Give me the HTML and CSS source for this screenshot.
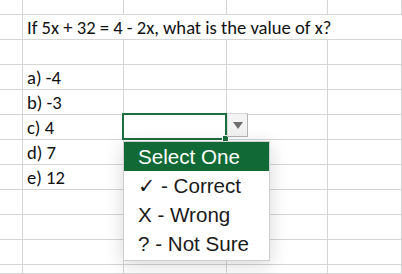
FILE: index.html
```html
<html>
    <head>
        <link rel="stylesheet" href="styles.css">
        <title>Quiz sheet</title>
    </head>
    <body>
        <div class="sheet">
            <div class="cell"></div><div class="cell"></div><div class="cell"></div><div class="cell"></div><div class="cell"></div>

            <div class="cell"></div><div class="cell question">If 5x + 32 = 4 - 2x, what is the value of x?</div>

            <div class="cell"></div><div class="cell"></div><div class="cell"></div><div class="cell"></div><div class="cell"></div>

            <div class="cell"></div><div class="cell">a) -4</div><div class="cell"></div><div class="cell"></div><div class="cell"></div>
            <div class="cell"></div><div class="cell">b) -3</div><div class="cell"></div><div class="cell"></div><div class="cell"></div>
            <div class="cell"></div><div class="cell">c) 4</div>
            <div class="cell selected">
                <div class="selBorder"><span class="handle"></span></div>
                <div class="dropButton"><span class="arrow"></span></div>
                <ul class="dropList">
                    <li class="current">Select One</li>
                    <li>✓ - Correct</li>
                    <li>X - Wrong</li>
                    <li>? - Not Sure</li>
                </ul>
            </div>
            <div class="cell"></div><div class="cell"></div>
            <div class="cell"></div><div class="cell">d) 7</div><div class="cell"></div><div class="cell"></div><div class="cell"></div>
            <div class="cell"></div><div class="cell">e) 12</div><div class="cell"></div><div class="cell"></div><div class="cell"></div>

            <div class="cell"></div><div class="cell"></div><div class="cell"></div><div class="cell"></div><div class="cell"></div>
            <div class="cell"></div><div class="cell"></div><div class="cell"></div><div class="cell"></div><div class="cell"></div>
            <div class="cell"></div><div class="cell"></div><div class="cell"></div><div class="cell"></div><div class="cell"></div>
            <div class="cell"></div><div class="cell"></div><div class="cell"></div><div class="cell"></div><div class="cell"></div>
        </div>
    </body>
</html>
```

FILE: styles.css
```css
html, body {margin: 0; padding: 0; background: #fff;}
body {font-family: Calibri, Carlito, Lato, "Liberation Sans", sans-serif; overflow: hidden;}

.sheet {
    display: grid;
    grid-template-columns: 23px 101px 103px 101px 1fr;
    grid-template-rows: 15px repeat(10, 25px) 9px;
    height: 274px;
    overflow: hidden;
}

.cell {
    box-sizing: border-box;
    border-right: 1px solid #d5d5d5;
    border-bottom: 1px solid #d5d5d5;
    padding: 1px 0 0 4px;
    font-size: 18.6px;
    line-height: 24px;
    color: #111;
    white-space: nowrap;
}

.question {grid-column: 2 / -1; border-right: none;}

/* active cell with data validation list open */
.selected {position: relative;}

.selBorder {
    position: absolute;
    left: -2px; top: -2px;
    width: 105px; height: 27px;
    box-sizing: border-box;
    border: 2px solid #1d6f3f;
}
.handle {
    position: absolute;
    right: -4px; bottom: -4px;
    width: 5px; height: 5px;
    background: #1d6f3f;
    border: 1px solid #fff;
}

.dropButton {
    position: absolute;
    left: 103px; top: -2px;
    width: 21px; height: 24px;
    box-sizing: border-box;
    background: #f3f3f3;
    border: 1px solid #b4b4b4;
    border-left-color: #dcdcdc;
    border-top-color: #d6d6d6;
    display: flex;
    align-items: center;
    justify-content: center;
}
.arrow {
    width: 0; height: 0;
    border-left: 5px solid transparent;
    border-right: 5px solid transparent;
    border-top: 7px solid #6e6e6e;
}

.dropList {
    position: absolute;
    left: -1px; top: 26px;
    width: 147px;
    margin: 0; padding: 0 0 2px 0;
    list-style: none;
    box-sizing: border-box;
    background: #fff;
    border: 1px solid #cfcfcf;
    box-shadow: 0 4px 18px rgba(0,0,0,0.16);
    font-family: "Liberation Sans", Arial, "DejaVu Sans", sans-serif;
    font-size: 20.6px;
    z-index: 2;
}
.dropList li {
    height: 29px;
    line-height: 29px;
    padding-left: 14px;
    color: #1b1b1b;
}
.dropList li.current {background: #116a35; color: #fff;}
```
